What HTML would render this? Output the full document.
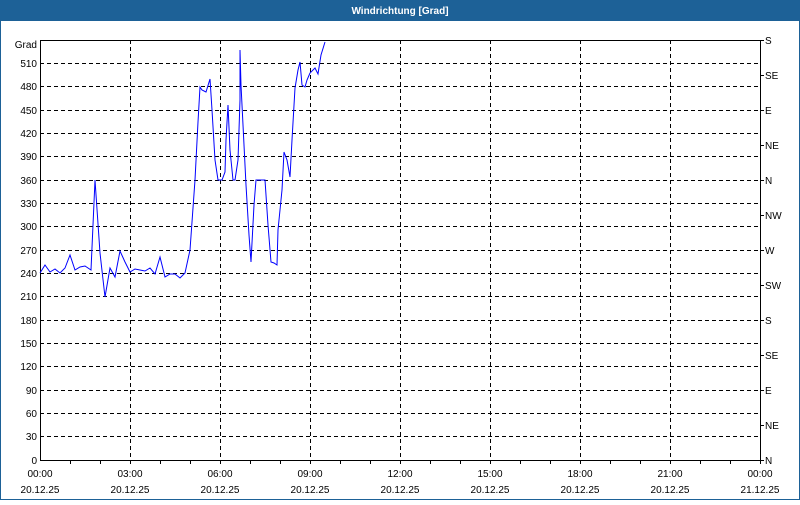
<!DOCTYPE html>
<html><head><style>
body{margin:0;width:800px;height:500px;overflow:hidden;background:#fff;font-family:"Liberation Sans",sans-serif}
</style></head><body>
<svg width="800" height="500" xmlns="http://www.w3.org/2000/svg" font-family="Liberation Sans, sans-serif" font-size="10" fill="#000">
<rect x="0" y="0" width="800" height="500" fill="#fff"/>
<rect x="0" y="0" width="800" height="21" fill="#1d6197"/>
<rect x="0" y="0" width="1" height="500" fill="#1d6197"/>
<rect x="799" y="0" width="1" height="500" fill="#1d6197"/>
<rect x="0" y="499" width="800" height="1" fill="#1d6197"/>
<text x="400" y="14" text-anchor="middle" fill="#fff" font-weight="bold" font-size="10">Windrichtung [Grad]</text>
<g stroke="#000" stroke-width="1" stroke-dasharray="4,3" fill="none">
<path d="M40 63.5H760M40 86.5H760M40 110.5H760M40 133.5H760M40 156.5H760M40 180.5H760M40 203.5H760M40 226.5H760M40 250.5H760M40 273.5H760M40 296.5H760M40 320.5H760M40 343.5H760M40 366.5H760M40 390.5H760M40 413.5H760M40 436.5H760"/>
<path d="M130.5 40V460M220.5 40V460M310.5 40V460M400.5 40V460M490.5 40V460M580.5 40V460M670.5 40V460"/>
</g>
<g stroke="#000" stroke-width="1" fill="none">
<path d="M40.5 40V460.5H760.5V40M40 40.5H760"/>
<path d="M70.5 460v4M100.5 460v4M130.5 460v4M160.5 460v4M190.5 460v4M220.5 460v4M250.5 460v4M280.5 460v4M310.5 460v4M340.5 460v4M370.5 460v4M400.5 460v4M430.5 460v4M460.5 460v4M490.5 460v4M520.5 460v4M550.5 460v4M580.5 460v4M610.5 460v4M640.5 460v4M670.5 460v4M700.5 460v4M730.5 460v4M760.5 460v4"/>
<path d="M760 40.5h4M760 75.5h4M760 110.5h4M760 145.5h4M760 180.5h4M760 215.5h4M760 250.5h4M760 285.5h4M760 320.5h4M760 355.5h4M760 390.5h4M760 425.5h4M760 460.5h4"/>
</g>
<g text-anchor="end">
<text x="37" y="48">Grad</text>
<text x="37" y="67">510</text><text x="37" y="90">480</text><text x="37" y="114">450</text><text x="37" y="137">420</text><text x="37" y="160">390</text><text x="37" y="184">360</text><text x="37" y="207">330</text><text x="37" y="230">300</text><text x="37" y="254">270</text><text x="37" y="277">240</text><text x="37" y="300">210</text><text x="37" y="324">180</text><text x="37" y="347">150</text><text x="37" y="370">120</text><text x="37" y="394">90</text><text x="37" y="417">60</text><text x="37" y="440">30</text><text x="37" y="464">0</text>
</g>
<g>
<text x="765" y="44">S</text><text x="765" y="79">SE</text><text x="765" y="114">E</text><text x="765" y="149">NE</text><text x="765" y="184">N</text><text x="765" y="219">NW</text><text x="765" y="254">W</text><text x="765" y="289">SW</text><text x="765" y="324">S</text><text x="765" y="359">SE</text><text x="765" y="394">E</text><text x="765" y="429">NE</text><text x="765" y="464">N</text>
</g>
<g text-anchor="middle">
<text x="40" y="477">00:00</text><text x="130" y="477">03:00</text><text x="220" y="477">06:00</text><text x="310" y="477">09:00</text><text x="400" y="477">12:00</text><text x="490" y="477">15:00</text><text x="580" y="477">18:00</text><text x="670" y="477">21:00</text><text x="760" y="477">00:00</text>
<text x="40" y="493">20.12.25</text><text x="130" y="493">20.12.25</text><text x="220" y="493">20.12.25</text><text x="310" y="493">20.12.25</text><text x="400" y="493">20.12.25</text><text x="490" y="493">20.12.25</text><text x="580" y="493">20.12.25</text><text x="670" y="493">20.12.25</text><text x="760" y="493">21.12.25</text>
</g>
<polyline fill="none" stroke="#0000ff" stroke-width="1" points="40,273 45,265 50,272 55,269 60,273 65,268 70,255 75,270 80,267 85,266 91,270 95,180 100,253 105,297 110,268 115,277 120,251 125,262 130,272 135,269 140,270 145,271 150,268 155,274 160,257 165,277 170,274 175,274 180,278 185,273 190,250 195,180 198,122 200,87 202,90 206,92 210,79 212,110 215,160 218,180 222,180 225,172 226,140 228,105 230,150 233,180 235,180 238,160 240,100 240,50 241,85 246,185 249,235 251,262 254,205 256,180 265,180 268,225 271,262 274,263 277,265 278,230 282,190 284,152 287,160 290,177 292,140 295,88 298,70 300,62 302,85 305,87 307,80 310,73 315,68 318,74 321,55 325,42"/>
</svg>
</body></html>
